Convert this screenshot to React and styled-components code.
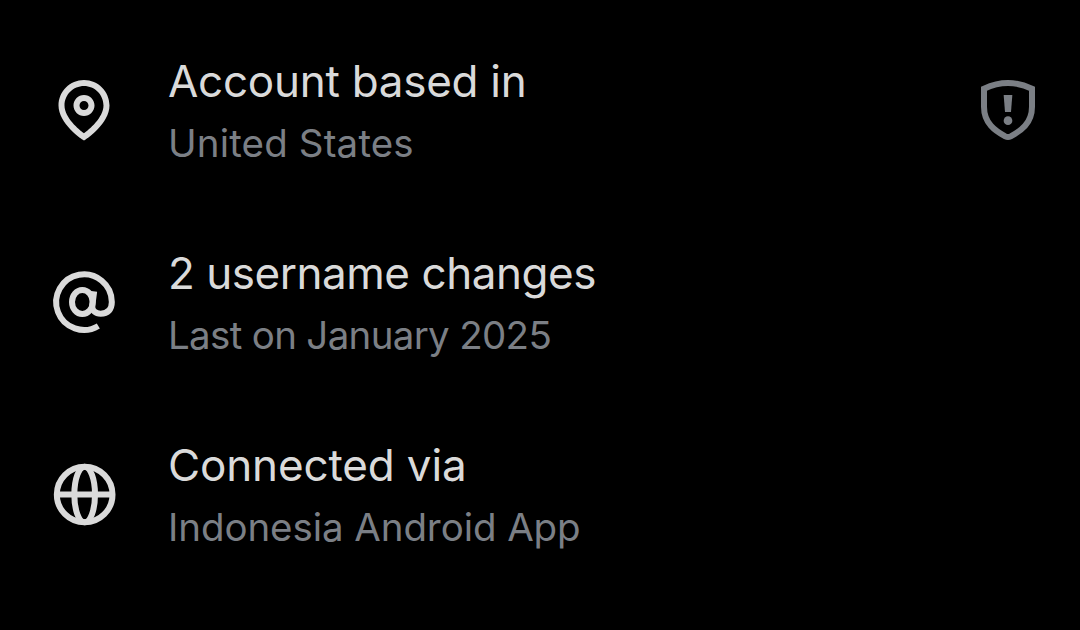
import React from "react";
import styled, { createGlobalStyle } from "styled-components";

const GlobalStyle = createGlobalStyle`
  *, *::before, *::after { box-sizing: border-box; }
  body { margin: 0; background: #000; }
`;

const Panel = styled.main`
  width: 1080px;
  height: 630px;
  padding: 14px 36px 0 48px;
  overflow: hidden;
  background: #000;
  font-family: Inter, "Liberation Sans", sans-serif;
`;

const Row = styled.section`
  display: flex;
  align-items: center;
  gap: 48px;
  height: 192px;
`;

const Icon = styled.svg`
  flex: none;
  width: 72px;
  height: 72px;
  color: ${(p) => (p.$muted ? "#7b7f85" : "#dadada")};
`;

const Copy = styled.div`
  flex: 1;
  white-space: nowrap;
`;

const Title = styled.div`
  font-size: 44px;
  line-height: 66px;
  letter-spacing: ${(p) => p.$tracking}px;
  color: #dadada;
`;

const Detail = styled.div`
  font-size: 38.5px;
  line-height: 58px;
  letter-spacing: ${(p) => p.$tracking}px;
  color: #7b7f85;
`;

const PinIcon = () => (
  <Icon viewBox="0 0 24 24" fill="currentColor" aria-hidden="true">
    <path d="M12 7c-1.93 0-3.5 1.57-3.5 3.5S10.07 14 12 14s3.5-1.57 3.5-3.5S13.93 7 12 7zm0 5c-.827 0-1.5-.673-1.5-1.5S11.173 9 12 9s1.5.673 1.5 1.5S12.827 12 12 12zm0-10c-4.687 0-8.5 3.813-8.5 8.5 0 5.967 7.621 11.116 7.945 11.332l.555.37.555-.37c.324-.216 7.945-5.365 7.945-11.332C20.5 5.813 16.687 2 12 2zm0 17.77c-1.665-1.241-6.5-5.196-6.5-9.27C5.5 6.916 8.416 4 12 4s6.5 2.916 6.5 6.5c0 4.073-4.835 8.028-6.5 9.27z" />
  </Icon>
);

const AtIcon = () => (
  <Icon viewBox="0 0 216 216" fill="none" stroke="currentColor" strokeWidth="18" aria-hidden="true">
    <ellipse cx="103" cy="108" rx="31" ry="36" />
    <path d="M138.500 76L133 118C131 134 143 143 158 143C180 143 191.500 130 191.500 108A83.500 83.500 0 1 0 151 180" />
  </Icon>
);

const GlobeIcon = () => (
  <Icon viewBox="0 0 216 216" fill="none" stroke="currentColor" strokeWidth="18" aria-hidden="true">
    <circle cx="110" cy="109.500" r="83.500" />
    <ellipse cx="110" cy="109.500" rx="31" ry="83.500" />
    <path d="M26 109.500H194" />
  </Icon>
);

const ShieldIcon = () => (
  <Icon $muted viewBox="0 0 216 216" fill="none" aria-hidden="true">
    <path
      d="M36 44C60 33 84 27 108 27S156 33 180 44V98C180 148 146 171 116 187Q108 191 100 187C70 171 36 148 36 98Z"
      stroke="currentColor"
      strokeWidth="18"
    />
    <path d="M95 63H121L117 114H99Z" fill="currentColor" />
    <circle cx="108" cy="140" r="13" fill="currentColor" />
  </Icon>
);

const entries = [
  { title: "Account based in", detail: "United States", icon: PinIcon, action: ShieldIcon, titleTracking: -0.27, detailTracking: 0.15 },
  { title: "2 username changes", detail: "Last on January 2025", icon: AtIcon, titleTracking: -0.47, detailTracking: -0.68 },
  { title: "Connected via", detail: "Indonesia Android App", icon: GlobeIcon, titleTracking: -0.14, detailTracking: -0.08 },
];

export default function App() {
  return (
    <>
      <GlobalStyle />
      <Panel>
        {entries.map(({ title, detail, icon: Lead, action: Action, titleTracking, detailTracking }) => (
          <Row key={title}>
            <Lead />
            <Copy>
              <Title $tracking={titleTracking}>{title}</Title>
              <Detail $tracking={detailTracking}>{detail}</Detail>
            </Copy>
            {Action && <Action />}
          </Row>
        ))}
      </Panel>
    </>
  );
}
